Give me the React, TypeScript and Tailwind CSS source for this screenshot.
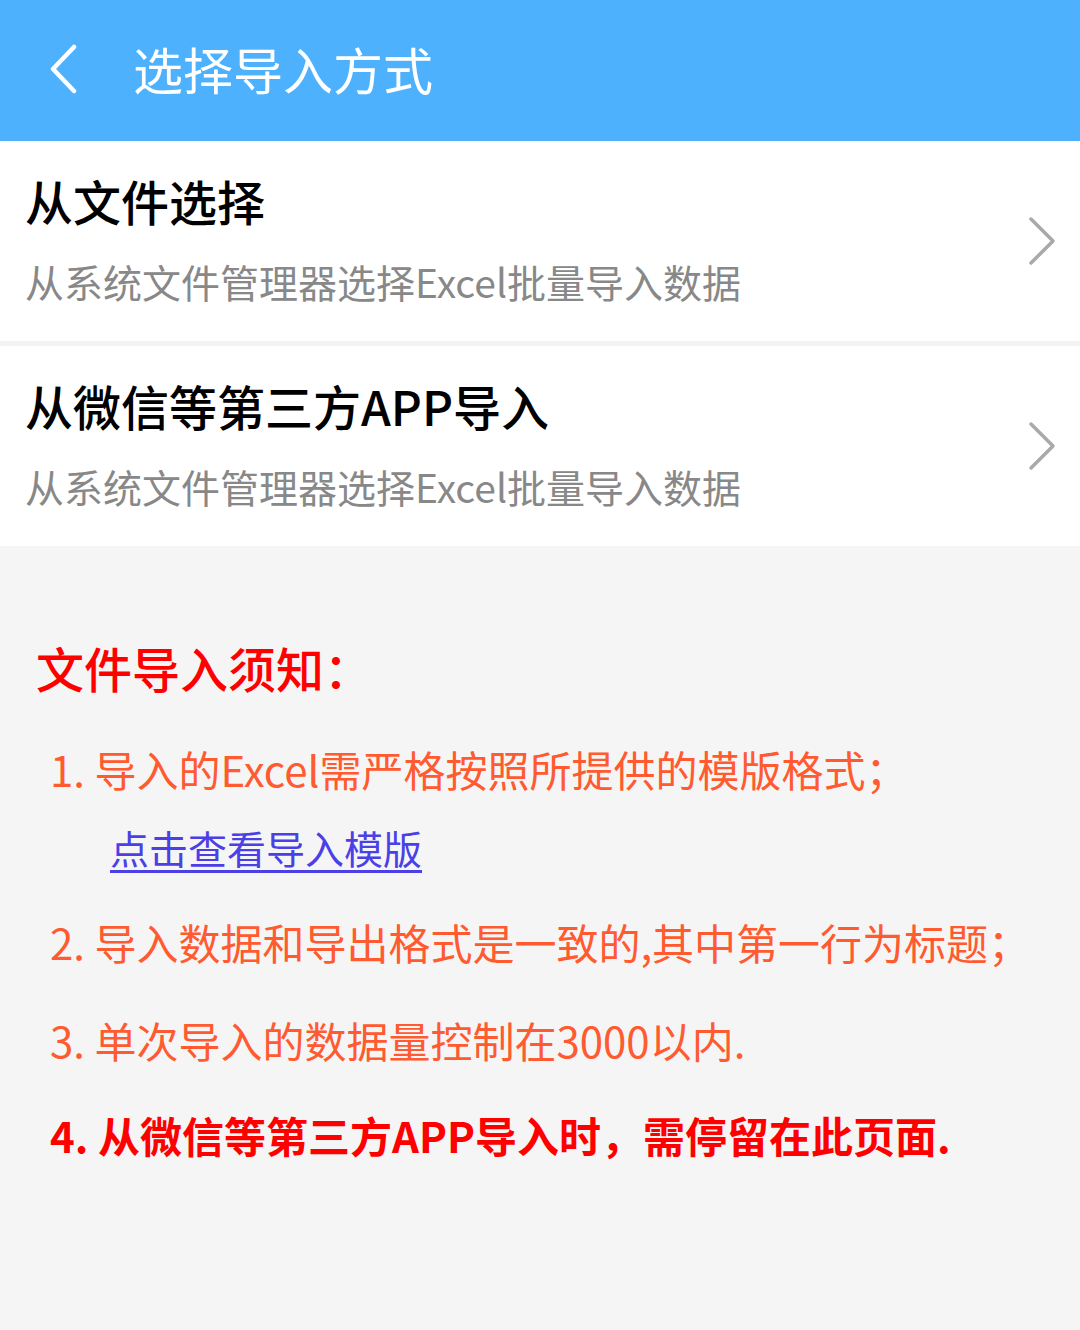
import React from "react";

const font = { fontFamily: '"Noto Sans CJK SC", "Noto Sans", sans-serif' };

function ChevronLeft() {
  return (
    <svg width="30" height="50" viewBox="0 0 30 50" fill="none">
      <path d="M26 3 L5 25 L26 47" stroke="white" strokeWidth="4.5" strokeLinecap="round" strokeLinejoin="round" />
    </svg>
  );
}

function ChevronRight() {
  return (
    <svg width="28" height="50" viewBox="0 0 28 50" fill="none">
      <path d="M3 3 L25 25 L3 47" stroke="#a9a9a9" strokeWidth="3.5" strokeLinecap="round" strokeLinejoin="round" />
    </svg>
  );
}

function OptionRow({ title }: { title: string }) {
  return (
    <div className="flex h-[200px] items-start justify-between bg-white pl-[25px] pr-[24px]">
      <div className="flex flex-col pt-[35px]">
        <p className="text-[48px] font-medium leading-none text-black">{title}</p>
        <p className="mt-[38px] text-[39px] leading-none text-[#888888]">
          从系统文件管理器选择Excel批量导入数据
        </p>
      </div>
      <div className="self-center">
        <ChevronRight />
      </div>
    </div>
  );
}

export default function App() {
  return (
    <div className="flex h-[1330px] w-[1080px] flex-col bg-[#f5f5f5]" style={font}>
      <header className="flex h-[141px] items-center bg-[#4db1fd] pl-[48px]">
        <div className="mb-[4px]">
          <ChevronLeft />
        </div>
        <h1 className="mb-[6px] ml-[55px] text-[50px] font-normal leading-none text-white">选择导入方式</h1>
      </header>

      <OptionRow title="从文件选择" />
      <div className="h-[5px] bg-[#f3f3f3]" />
      <OptionRow title="从微信等第三方APP导入" />

      <section className="flex flex-col pt-[97px]">
        <p className="pl-[36px] text-[48px] font-medium leading-none text-[#ff0000]">文件导入须知：</p>
        <p className="mt-[57px] pl-[50px] text-[42px] leading-none text-[#ff5a30]">
          1. 导入的Excel需严格按照所提供的模版格式；
        </p>
        <a className="mt-[38px] ml-[110px] w-fit text-[39px] leading-none text-[#4b3fe6] underline underline-offset-[6px]">
          点击查看导入模版
        </a>
        <p className="mt-[54px] pl-[50px] text-[42px] leading-none text-[#ff5a30]">
          2. 导入数据和导出格式是一致的,其中第一行为标题；
        </p>
        <p className="mt-[56px] pl-[50px] text-[42px] leading-none text-[#ff5a30]">
          3. 单次导入的数据量控制在3000以内.
        </p>
        <p className="mt-[53px] pl-[50px] text-[42px] font-bold leading-none text-[#ff0000]">
          4. 从微信等第三方APP导入时，需停留在此页面.
        </p>
      </section>
    </div>
  );
}
